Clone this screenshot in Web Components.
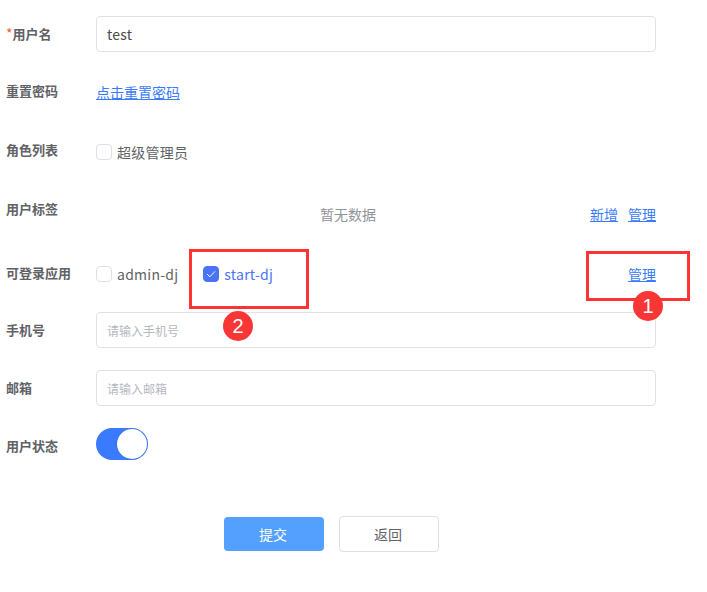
<!DOCTYPE html>
<html lang="zh"><head><meta charset="utf-8"><style>
html,body{margin:0;padding:0;background:#fff}
body{font-family:"Noto Sans CJK SC","Noto Sans",sans-serif;width:707px;height:592px;overflow:hidden;position:relative}
</style></head><body>
<user-form>
  <form-row label="用户名" required shift="-1"><text-field value="test"></text-field></form-row>
  <form-row label="重置密码" shift="-1"><a-link>点击重置密码</a-link></form-row>
  <form-row label="角色列表"><check-box style="margin-top:2px">超级管理员</check-box></form-row>
  <form-row label="用户标签" shift="1">
    <div style="display:flex;align-items:center;height:36px;margin-top:6px">
      <span style="flex:1;text-align:center;font-size:14px;color:#909399;padding-left:10px">暂无数据</span>
      <span style="display:flex;gap:10px"><a-link>新增</a-link><a-link>管理</a-link></span>
    </div>
  </form-row>
  <form-row label="可登录应用" h="64" shift="7">
    <div style="display:flex;align-items:center;height:36px;margin-top:8px">
      <div style="flex:1;display:flex;gap:25px"><check-box>admin-dj</check-box><check-box checked>start-dj</check-box></div>
      <a-link>管理</a-link>
    </div>
  </form-row>
  <form-row label="手机号"><text-field placeholder="请输入手机号"></text-field></form-row>
  <form-row label="邮箱"><text-field placeholder="请输入邮箱"></text-field></form-row>
  <form-row label="用户状态"><toggle-switch></toggle-switch></form-row>
  <form-actions><app-button primary>提交</app-button><app-button>返回</app-button></form-actions>
</user-form>
<note-box style="left:586px;top:251px;width:104px;height:50px"></note-box>
<note-box style="left:189px;top:249px;width:120px;height:60px"></note-box>
<note-dot style="left:633px;top:291px">1</note-dot>
<note-dot style="left:223px;top:311px">2</note-dot>
<script>
function def(name,css,html,setup){
  customElements.define(name,class extends HTMLElement{
    constructor(){super();const s=this.attachShadow({mode:'open'});s.innerHTML='<style>'+css+'</style>'+html;}
    connectedCallback(){if(setup)setup(this,this.shadowRoot);}
  });
}
def('user-form',':host{display:block;padding:16px 51px 0 6px}','<slot></slot>');
def('form-row',`:host{display:flex;height:58px;box-sizing:border-box}
 .l{width:90px;flex:none;font-size:13px;font-weight:700;color:#606266;line-height:36px;white-space:nowrap}
 .r{color:#e0632f;font-weight:400;font-size:14px}.c{flex:1;min-width:0}`,
 '<div class="l"></div><div class="c"><slot></slot></div>',(h,s)=>{
  const l=s.querySelector('.l');l.textContent=h.getAttribute('label')||'';
  if(h.hasAttribute('required')){const i=document.createElement('span');i.className='r';i.textContent='*';l.prepend(i);}
  if(h.getAttribute('h'))h.style.height=h.getAttribute('h')+'px';
  if(h.getAttribute('shift'))l.style.marginTop=h.getAttribute('shift')+'px';
 });
def('text-field',`:host{display:block}
 .b{height:36px;box-sizing:border-box;border:1px solid #e2e2e2;border-radius:4px;padding:0 10px;display:flex;align-items:center;font-size:14px;letter-spacing:.2px;color:#4a4a4a}
 .p{font-size:12px;letter-spacing:0;color:#b5b8bf}`,'<div class="b"><span></span></div>',(h,s)=>{
  const sp=s.querySelector('span');
  if(h.hasAttribute('placeholder')){sp.className='p';sp.textContent=h.getAttribute('placeholder');}
  else sp.textContent=h.getAttribute('value')||'';
 });
def('a-link',`:host{display:inline-block;font-size:14px;line-height:36px;color:#3a7afe;text-decoration:underline}`,'<slot></slot>');
def('check-box',`:host{display:inline-flex;align-items:center;height:36px;font-size:14px;letter-spacing:.25px;color:#606266;gap:5px;white-space:nowrap}
 .x{width:16px;height:16px;box-sizing:border-box;border:1px solid #dcdfe6;border-radius:4px;display:flex;align-items:center;justify-content:center;background:#fff}
 :host([checked]){color:#4a74f5}
 :host([checked]) .x{background:#4a74f5;border-color:#4a74f5}
 svg{display:none}:host([checked]) svg{display:block}`,
 '<span class="x"><svg width="10" height="10" viewBox="0 0 10 10"><path d="M1 5 3.8 7.8 9 2.4" fill="none" stroke="#fff" stroke-width="1"/></svg></span><slot></slot>');
def('toggle-switch',`:host{display:block;width:52px;height:32px;box-sizing:border-box;border-radius:16px;background:#3a7afe;position:relative}
 i{position:absolute;right:1px;top:1px;width:30px;height:30px;border-radius:50%;background:#fff;box-shadow:0 0 2px rgba(0,0,0,.15)}`,'<i></i>');
def('form-actions',`:host{display:flex;align-items:center;gap:15px;padding:30px 0 0 218px}`,'<slot></slot>');
def('app-button',`:host{display:flex;align-items:center;justify-content:center;width:100px;height:36px;box-sizing:border-box;border:1px solid #dcdfe6;border-radius:4px;font-size:14px;line-height:20px;padding:0 2px 1px 0;color:#606266;background:#fff}
 :host([primary]){height:34px;border:0;background:#54a0ff;color:#fff}`,'<slot></slot>');
def('note-box',`:host{position:absolute;box-sizing:border-box;border:3px solid #ff3333}`,'');
def('note-dot',`:host{position:absolute;width:30px;height:30px;border-radius:50%;background:#f93636;color:#fff;display:flex;align-items:center;justify-content:center;font:20px "Liberation Sans",sans-serif}`,'<slot></slot>');
</script>
</body></html>
